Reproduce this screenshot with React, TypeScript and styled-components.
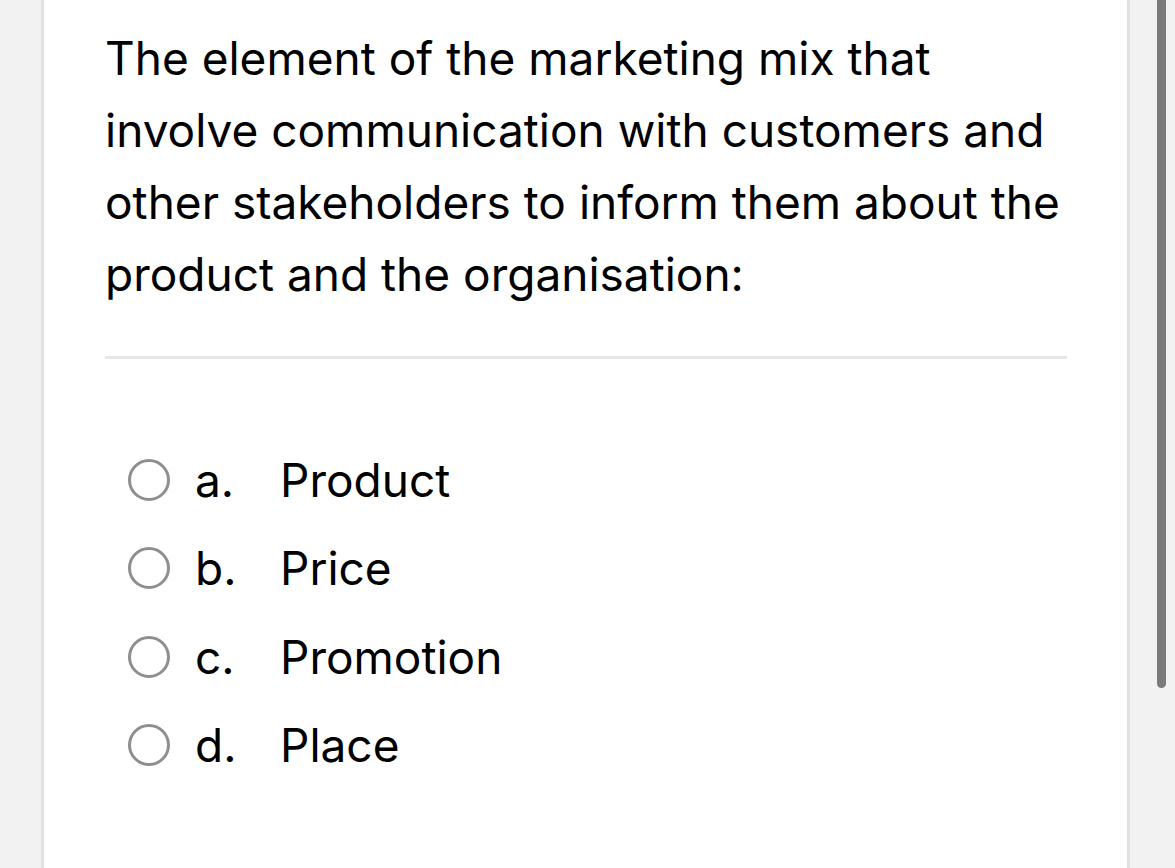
import React from 'react';
import styled, { createGlobalStyle } from 'styled-components';

const GlobalStyle = createGlobalStyle`
  html, body {
    margin: 0;
    padding: 0;
    background: #f2f2f2;
    overflow: hidden;
  }
  body {
    font-family: Inter, "Liberation Sans", Arial, sans-serif;
    -webkit-font-smoothing: antialiased;
  }
`;

const Page = styled.div`
  position: relative;
  display: flex;
  height: 868px;
  padding-left: 41px;
  background: #f2f2f2;
`;

const Card = styled.div`
  width: 1089px;
  box-sizing: border-box;
  background: #ffffff;
  border-left: 3px solid #dee2e6;
  border-right: 3px solid #dee2e6;
  padding: 22px 60px 0 61px;
`;

const Question = styled.div`
  font-size: 46px;
  line-height: 72px;
  color: #000000;
`;

const Divider = styled.hr`
  border: none;
  height: 3px;
  background: #e6e8eb;
  margin: 46px 0 0;
`;

const Options = styled.div`
  display: flex;
  flex-direction: column;
  padding: 77px 0 0 23px;
`;

const OptionRow = styled.label`
  display: flex;
  align-items: center;
  height: 88.3px;
  font-size: 46px;
  color: #000000;
  cursor: pointer;
`;

const Radio = styled.span`
  width: 36px;
  height: 36px;
  border-radius: 50%;
  border: 3px solid #8e8e93;
  flex-shrink: 0;
`;

const Letter = styled.span`
  width: 85px;
  margin-left: 25px;
`;

const Answer = styled.span``;

const Scrollbar = styled.div`
  position: absolute;
  top: 0;
  left: 1157px;
  width: 9px;
  height: 688px;
  background: #7a7a7a;
  border-radius: 0 0 5px 5px;
`;

const options = [
  { letter: 'a.', text: 'Product' },
  { letter: 'b.', text: 'Price' },
  { letter: 'c.', text: 'Promotion' },
  { letter: 'd.', text: 'Place' },
];

export default function App() {
  return (
    <>
      <GlobalStyle />
      <Page>
        <Card>
          <Question>
            The element of the marketing mix that involve communication with customers and other
            stakeholders to inform them about the product and the organisation:
          </Question>
          <Divider />
          <Options>
            {options.map(o => (
              <OptionRow key={o.letter}>
                <Radio />
                <Letter>{o.letter}</Letter>
                <Answer>{o.text}</Answer>
              </OptionRow>
            ))}
          </Options>
        </Card>
        <Scrollbar />
      </Page>
    </>
  );
}
